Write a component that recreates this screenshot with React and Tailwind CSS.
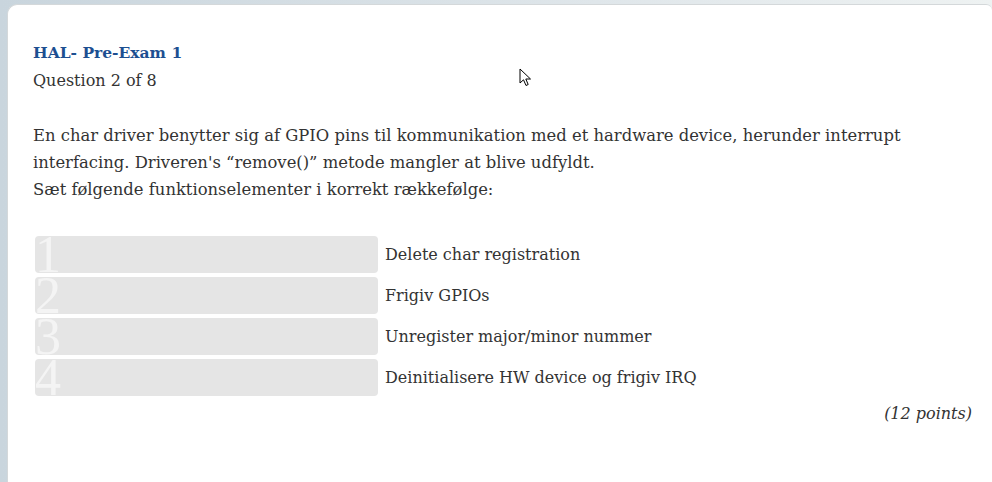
import React from "react";

const items = [
  "Delete char registration",
  "Frigiv GPIOs",
  "Unregister major/minor nummer",
  "Deinitialisere HW device og frigiv IRQ",
];

const Cursor = () => (
  <svg width="14" height="20" viewBox="0 0 14 20" className="absolute left-[519px] top-[68px]">
    <path
      d="M1 1 L1 15 L4.5 11.8 L7 17.5 L9.2 16.5 L6.8 11 L11.5 11 Z"
      fill="white"
      stroke="black"
      strokeWidth="1"
      strokeLinejoin="round"
    />
  </svg>
);

export default function App() {
  return (
    <div className="relative h-[482px] w-[992px] overflow-hidden bg-[linear-gradient(90deg,#c9d5dd,#dfe6ea_60%,#eef2f2)] pl-[7px] pt-[4px] font-['DejaVu_Serif',serif] text-[#333]">
      <div className="h-full rounded-tl-[10px] rounded-tr-[6px] border-l border-t border-[#d4d8da] bg-white pl-[25px] pr-[20px] pt-[34px]">
        <h1 className="text-[15.5px] font-bold leading-[28px] text-[#1d4f91]">HAL- Pre-Exam 1</h1>
        <p className="text-[16px] leading-[28px]">Question 2 of 8</p>

        <div className="mt-[27px] text-[16.4px] leading-[27px]">
          <p>
            En char driver benytter sig af GPIO pins til kommunikation med et hardware device, herunder interrupt
            <br />
            interfacing. Driveren's “remove()” metode mangler at blive udfyldt.
          </p>
          <p>Sæt følgende funktionselementer i korrekt rækkefølge:</p>
        </div>

        <div className="mt-[33px] flex flex-col gap-[4px] pl-[2px]">
          {items.map((text, i) => (
            <div key={text} className="flex items-center gap-[7px]">
              <div className="flex h-[37px] w-[343px] items-end rounded-[4px] bg-[#e5e5e5]">
                <span className="font-['Liberation_Serif',serif] text-[52px] leading-[37px] text-[#f4f4f4]">
                  {i + 1}
                </span>
              </div>
              <span className="text-[16px]">{text}</span>
            </div>
          ))}
        </div>

        <p className="mt-[6px] text-right text-[16px] italic">(12 points)</p>
      </div>
      <Cursor />
    </div>
  );
}
